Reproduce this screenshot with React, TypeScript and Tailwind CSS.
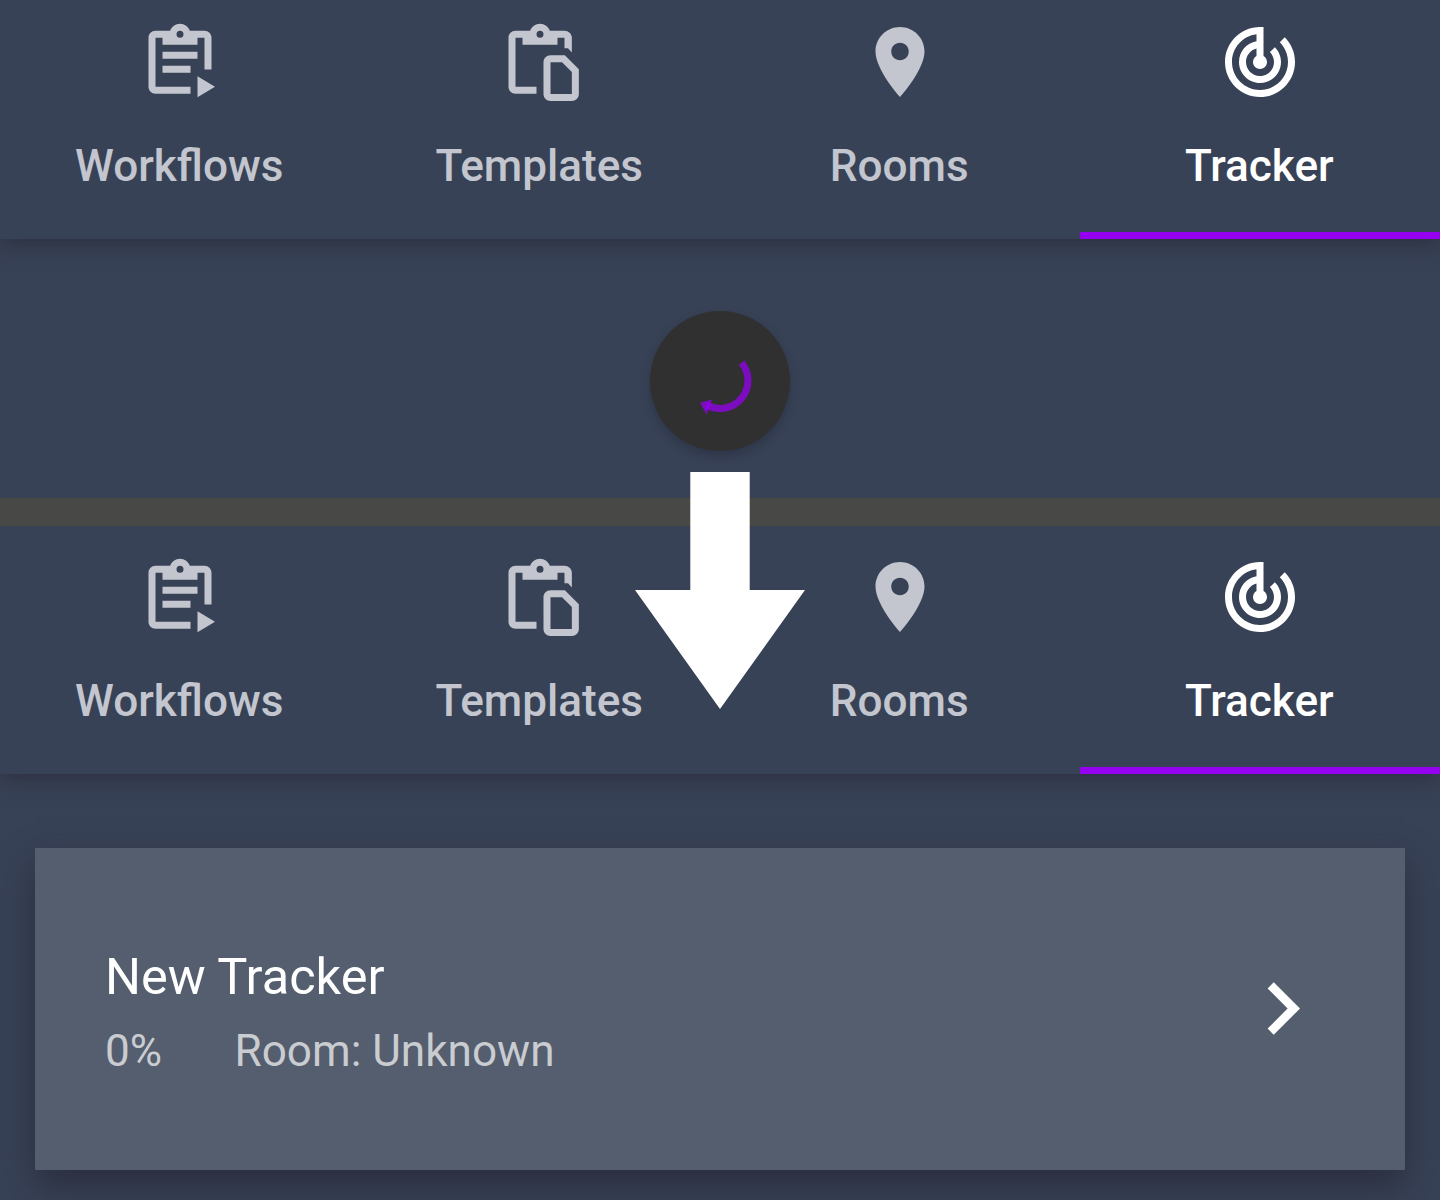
import React from "react";

const ClipboardPlay = () => (
  <svg viewBox="0 -0.05 24 24" className="size-[84px]" fill="currentColor">
    <path
      fillRule="evenodd"
      d="M19 3H14.82C14.4 1.84 13.3 1 12 1S9.6 1.84 9.18 3H5C3.9 3 3 3.9 3 5V19C3 20.1 3.9 21 5 21H15V19H5V5H7V7H17V5H19V14.1H21V5C21 3.9 20.1 3 19 3ZM12 3A1 1 0 1 1 12 5A1 1 0 1 1 12 3ZM7 9H17V11H7ZM7 13H15V15H7ZM17 16L22 19L17 22Z"
    />
  </svg>
);

const ClipboardFile = () => (
  <svg viewBox="0 -0.05 24 24" className="size-[84px]" fill="currentColor">
    <path
      fillRule="evenodd"
      d="M19 3H14.82C14.4 1.84 13.3 1 12 1S9.6 1.84 9.18 3H5C3.9 3 3 3.9 3 5V19C3 20.1 3.9 21 5 21H11V19H5V5H7V7H17V5H19V8H20L21.1 9.2V5C21.1 3.9 20.1 3 19 3ZM12 3A1 1 0 1 1 12 5A1 1 0 1 1 12 3ZM15 10H19.1L23.1 14V21.1C23.1 22.2 22.2 23.1 21.1 23.1H15C13.9 23.1 13 22.2 13 21.1V12C13 10.9 13.9 10 15 10ZM15 12V21.1H21.1V14.8L18.3 12Z"
    />
  </svg>
);

const Pin = () => (
  <svg viewBox="0 0 24 24" className="size-[84px]" fill="currentColor">
    <path d="M12 2C8.13 2 5 5.13 5 9c0 5.25 7 13 7 13s7-7.75 7-13c0-3.87-3.13-7-7-7zm0 9.5c-1.38 0-2.5-1.12-2.5-2.5s1.12-2.5 2.5-2.5 2.5 1.12 2.5 2.5-1.12 2.5-2.5 2.5z" />
  </svg>
);

const Track = () => (
  <svg viewBox="0 0 24 24" className="size-[84px]" fill="currentColor">
    <path d="M19.07 4.93l-1.41 1.41C19.1 7.79 20 9.79 20 12c0 4.42-3.58 8-8 8s-8-3.58-8-8c0-4.08 3.05-7.44 7-7.93v2.02C8.16 6.57 6 9.03 6 12c0 3.31 2.69 6 6 6s6-2.69 6-6c0-1.66-.67-3.16-1.76-4.24l-1.41 1.41C15.55 9.9 16 10.9 16 12c0 2.21-1.79 4-4 4s-4-1.79-4-4c0-1.86 1.28-3.41 3-3.86v2.14c-.6.35-1 .98-1 1.72 0 1.1.9 2 2 2s2-.9 2-2c0-.74-.4-1.38-1-1.72V2h-1C6.48 2 2 6.48 2 12s4.48 10 10 10 10-4.48 10-10c0-2.76-1.12-5.26-2.93-7.07z" />
  </svg>
);

const tabs = [
  { label: "Workflows", Icon: ClipboardPlay },
  { label: "Templates", Icon: ClipboardFile },
  { label: "Rooms", Icon: Pin },
  { label: "Tracker", Icon: Track, active: true },
];

const TabBar = ({ className }: { className: string }) => (
  <nav className={`grid shrink-0 grid-cols-4 items-end bg-[#384256] shadow-[0_7px_18px_rgba(40,38,52,0.55)] ${className}`}>
    {tabs.map(({ label, Icon, active }) => (
      <div
        key={label}
        className={`flex h-[219px] flex-col items-center border-b-[7px] ${
          active ? "border-[#9600f0] text-white" : "border-transparent text-[#c3c6ce]"
        }`}
      >
        <Icon />
        <span className="mt-[32px] pr-[1.5px] text-[44.1px] leading-[60px] font-medium">{label}</span>
      </div>
    ))}
  </nav>
);

export default function App() {
  return (
    <div className="relative flex h-[1200px] w-[1440px] flex-col overflow-hidden bg-[#384256] font-['Roboto',sans-serif]">
      <section className="flex h-[498px] shrink-0 flex-col items-center">
        <TabBar className="h-[239px] w-full" />
        <div className="mt-[71.5px] flex size-[140px] items-center justify-center rounded-full bg-[#303030] shadow-[0_5px_10px_rgba(30,28,45,0.35)]">
          <svg viewBox="-42 -42 84 84" className="size-[84px]">
            <path d="M21.6 -18.3A28 28 0 0 1 -13.2 24.2" fill="none" stroke="#9600f0" strokeOpacity="0.75" strokeWidth="7" />
            <path d="M-20 21.8L-8 18.5L-13.4 33.5Z" fill="#9600f0" fillOpacity="0.75" />
          </svg>
        </div>
      </section>
      <div className="h-[28px] shrink-0 bg-[#484847]" />
      <section className="flex flex-1 flex-col [clip-path:inset(0)]">
        <TabBar className="h-[248px]" />
        <div className="mx-[35px] mt-[74px] flex h-[322px] items-start justify-between bg-[#555e6e] px-[70px] shadow-[0_16px_32px_rgba(36,36,50,0.65)]">
          <div className="mt-[99px] flex flex-col">
            <h2 className="text-[50.5px] leading-[60px] text-white">New Tracker</h2>
            <div className="mt-[14px] flex text-[44.1px] leading-[60px] text-[#c9ccd0]">
              <span className="w-[129.5px]">0%</span>
              <span>Room: Unknown</span>
            </div>
          </div>
          <svg viewBox="0 0 24 24" className="mt-[108px] size-[105px]" fill="#fff">
            <path d="M10 6L8.59 7.41 13.17 12l-4.58 4.59L10 18l6-6z" />
          </svg>
        </div>
      </section>
      <svg viewBox="0 0 170 237" className="absolute top-[472px] left-[635px] h-[237px] w-[170px]" fill="#fff">
        <path d="M55.3 0H114.7V118H170L85 237L0 118H55.3Z" />
      </svg>
    </div>
  );
}
